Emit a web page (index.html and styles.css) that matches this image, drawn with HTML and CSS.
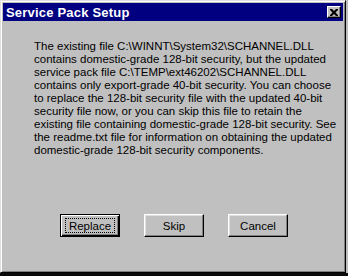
FILE: index.html
```html
<!DOCTYPE html>
<html lang="en">
<head>
  <meta charset="UTF-8"/>
  <title>Service Pack Setup</title>
  <link rel="stylesheet" href="styles.css">
</head>
<body>
  <div class="dialog">
    <div class="titlebar">
      <span class="title">Service Pack Setup</span>
      <button class="close-btn" aria-label="Close">
        <svg width="8" height="7" viewBox="0 0 8 7">
          <path d="M0,0h2l2,2l2,-2h2v1l-2.5,2.5l2.5,2.5v1h-2l-2,-2l-2,2h-2v-1l2.5,-2.5l-2.5,-2.5z" fill="#000"/>
        </svg>
      </button>
    </div>

    <div class="content">
      <p class="message">
        The existing file C:\WINNT\System32\SCHANNEL.DLL<br>
        contains domestic-grade 128-bit security, but the updated<br>
        service pack file C:\TEMP\ext46202\SCHANNEL.DLL<br>
        contains only export-grade 40-bit security. You can choose<br>
        to replace the 128-bit security file with the updated 40-bit<br>
        security file now, or you can skip this file to retain the<br>
        existing file containing domestic-grade 128-bit security. See<br>
        the readme.txt file for information on obtaining the updated<br>
        domestic-grade 128-bit security components.
      </p>

      <div class="buttons">
        <button class="btn btn-default"><span class="focus">Replace</span></button>
        <button class="btn">Skip</button>
        <button class="btn">Cancel</button>
      </div>
    </div>
  </div>
</body>
</html>
```

FILE: styles.css
```css
*, *::before, *::after {
  box-sizing: border-box;
}
body {
  margin: 0;
  padding: 0;
  width: 348px;
  height: 276px;
  overflow: hidden;
  background: linear-gradient(to bottom, #bdbdbd 0, #bdbdbd 273px, #0a0a0a 273px);
  font-family: 'Liberation Sans', Arial, sans-serif;
  color: #000;
}

.dialog {
  width: 346px;
  height: 273px;
  background: #c0c0c0;
  border: 1px solid;
  border-color: #dfdfdf #000 #000 #dfdfdf;
  box-shadow: inset 1px 1px 0 #fff, inset -1px -1px 0 #808080;
  padding: 2px;
  display: flex;
  flex-direction: column;
}

.titlebar {
  height: 18px;
  background: #000080;
  display: flex;
  align-items: center;
  justify-content: space-between;
  padding: 0 2px 0 3px;
}
.title {
  color: #fff;
  font-weight: bold;
  font-size: 13px;
  letter-spacing: 0.2px;
}
.close-btn {
  width: 14px;
  height: 12px;
  padding: 0;
  margin: 0;
  background: #c0c0c0;
  border: 1px solid;
  border-color: #fff #000 #000 #fff;
  box-shadow: inset -1px -1px 0 #808080;
  display: flex;
  align-items: center;
  justify-content: center;
}

.content {
  flex: 1;
  padding: 0 0 0 31px;
}

.message {
  margin: 19px 0 0 0;
  font-size: 11.5px;
  line-height: 13px;
  white-space: nowrap;
}

.buttons {
  display: flex;
  gap: 24px;
  margin: 57px 0 0 26px;
}
.btn {
  width: 60px;
  height: 23px;
  padding: 0;
  background: #c0c0c0;
  font-family: 'Liberation Sans', Arial, sans-serif;
  font-size: 11.5px;
  color: #000;
  border: 1px solid;
  border-color: #fff #000 #000 #fff;
  box-shadow: inset -1px -1px 0 #808080, inset 1px 1px 0 #dfdfdf;
  display: flex;
  align-items: center;
  justify-content: center;
}
.btn-default {
  border: 1px solid #000;
  box-shadow: inset 1px 1px 0 #fff, inset -1px -1px 0 #000, inset -2px -2px 0 #808080;
}
.focus {
  display: flex;
  align-items: center;
  justify-content: center;
  width: 50px;
  height: 15px;
  border: 1px dotted #000;
}
```
